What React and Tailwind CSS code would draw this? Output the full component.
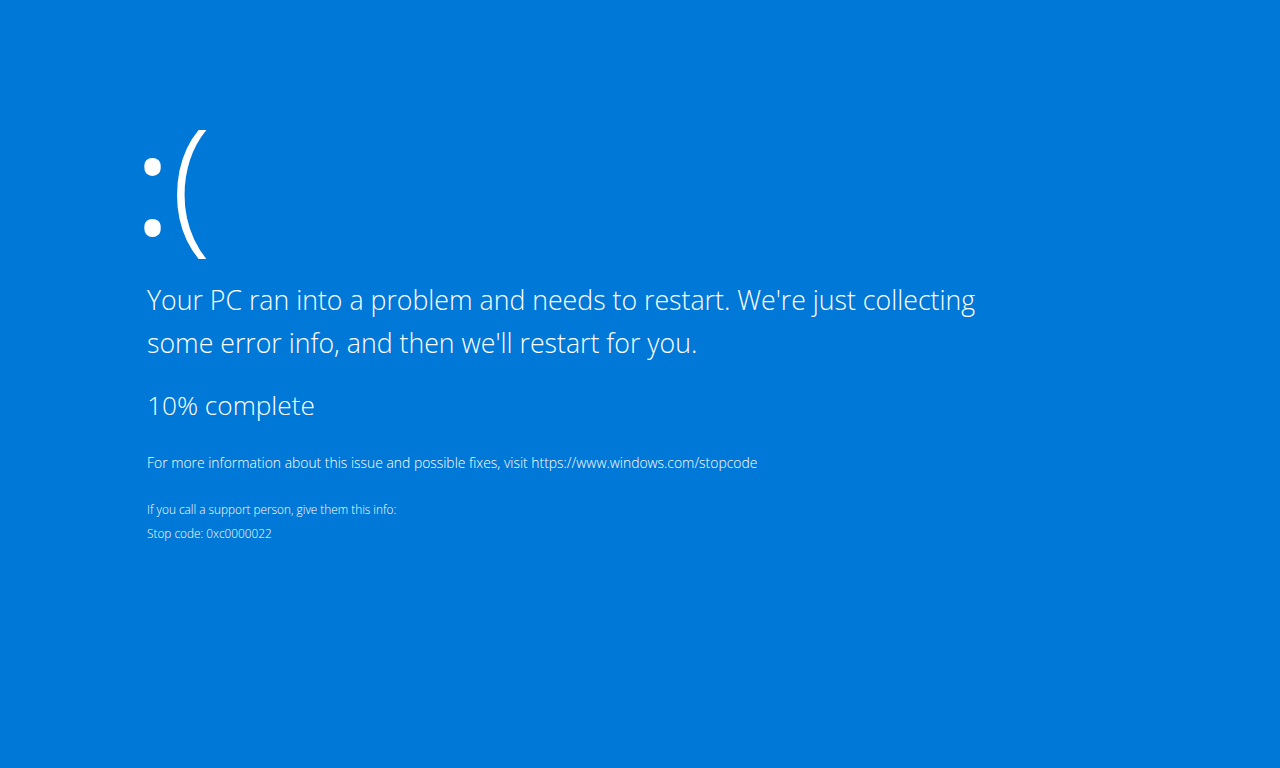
export default function App() {
  return (
    <div
      className="w-[1280px] h-[768px] bg-[#0078d7] text-white overflow-hidden"
      style={{ fontFamily: '"Open Sans", "Noto Sans", sans-serif' }}
    >
      <div className="pl-[147px] pt-[104px] flex flex-col">
        {/* sad face */}
        <div className="leading-[180px] h-[170px] -ml-[13px] -mt-[15px] mb-[15px] whitespace-nowrap">
          <span className="inline-block text-[141px] font-normal -translate-y-[1px]">:</span>
          <span className="text-[148px] font-light">(</span>
        </div>
        <p className="text-[26.7px] leading-[43px] font-light mt-[4px] w-[850px]">
          Your PC ran into a problem and needs to restart. We're just collecting some error info, and then we'll restart
          for you.
        </p>
        <p className="text-[26.2px] leading-[36px] font-light mt-[23px]">10% complete</p>
        <p className="text-[13.9px] leading-[20px] font-light mt-[30px]">
          For more information about this issue and possible fixes, visit https://www.windows.com/stopcode
        </p>
        <p className="text-[11.8px] leading-[16px] font-light mt-[28px]">If you call a support person, give them this info:</p>
        <p className="text-[11.8px] leading-[16px] font-light mt-[8px]">Stop code: 0xc0000022</p>
      </div>
    </div>
  );
}
